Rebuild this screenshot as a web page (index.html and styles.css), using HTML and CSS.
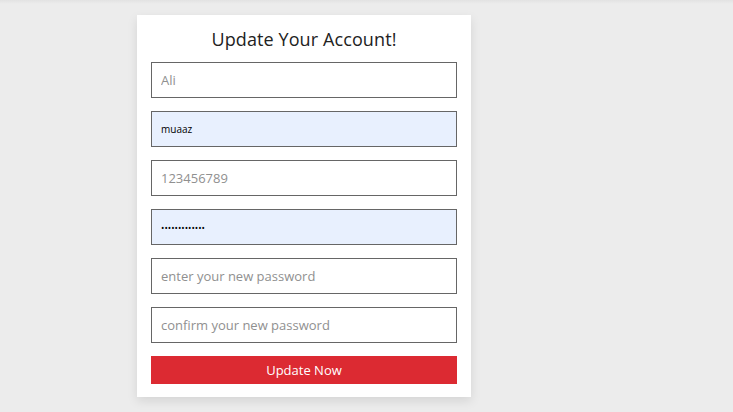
FILE: index.html
```html
<!DOCTYPE html>
<html>
<head>
<meta charset="utf-8">
<link rel="stylesheet" href="styles.css">
</head>
<body>
<div class="topshade"></div>
<main class="page">
  <form class="card">
    <h3 class="title">Update Your Account!</h3>
    <input class="field" type="text" placeholder="Ali">
    <input class="field filled" type="text" value="muaaz">
    <input class="field" type="text" placeholder="123456789">
    <input class="field filled pw" type="password" value="1234567890123">
    <input class="field" type="password" placeholder="enter your new password">
    <input class="field" type="password" placeholder="confirm your new password">
    <button class="btn" type="button">Update Now</button>
  </form>
</main>
</body>
</html>
```

FILE: styles.css
```css
* { box-sizing: border-box; }
html, body { margin: 0; padding: 0; }
body {
  background: #ececec;
  font-family: "Open Sans", "Noto Sans", sans-serif;
  height: 412px;
  overflow: hidden;
}
.topshade {
  height: 4px;
  background: linear-gradient(#e2e2e2, #ececec);
}
.page {
  padding: 11px 0 0 137px;
}
.card {
  width: 334px;
  background: #fff;
  padding: 0 14px 13px;
  display: flex;
  flex-direction: column;
  gap: 13px;
  box-shadow: 0 4px 10px rgba(0,0,0,0.10);
}
.title {
  margin: 0 0 -13px;
  height: 47px;
  padding-top: 12px;
  text-align: center;
  font-weight: 400;
  font-size: 18px;
  letter-spacing: 0.1px;
  color: #222;
  line-height: 24px;
}
.field {
  display: block;
  width: 306px;
  height: 36px;
  border: 1px solid #666;
  border-radius: 0;
  padding: 0 9px;
  font-family: "Open Sans", sans-serif;
  font-size: 13px;
  color: #555;
  background: #fff;
  outline: none;
}
.field::placeholder { color: #909090; }
.filled {
  background: #e8f0fe;
  color: #000;
  font-size: 10px;
}
.pw { font-size: 9px; }
.btn {
  display: block;
  width: 306px;
  height: 28px;
  border: 0;
  background: #dc2a32;
  color: #fff;
  font-family: "Open Sans", sans-serif;
  font-size: 13px;
  padding: 0;
  cursor: pointer;
}
```
